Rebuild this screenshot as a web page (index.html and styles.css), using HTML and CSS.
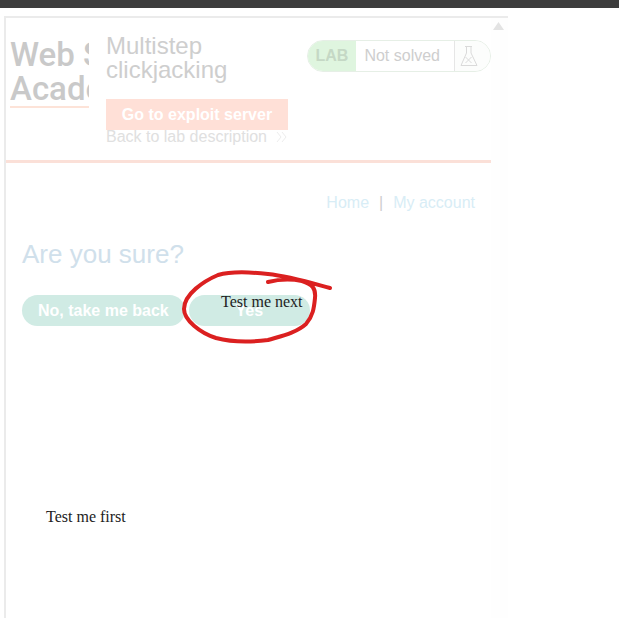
FILE: index.html
```html
<!DOCTYPE html>
<html lang="en">
<head>
  <meta charset="UTF-8" />
  <meta name="viewport" content="width=device-width, initial-scale=1.0"/>
  <title>Multistep clickjacking</title>
  <link rel="stylesheet" href="styles.css">
</head>
<body>
  <div class="topbar"></div>
  <div class="frame">
    <div class="page">
      <header class="header">
        <div class="logo">
          <span>Web Security</span>
          <span>Academy</span>
        </div>
        <div class="title">
          <h2>Multistep clickjacking</h2>
          <button class="exploit">Go to exploit server</button>
          <a class="back" href="#"><span>Back to lab description</span>
            <svg width="12" height="12" viewBox="0 0 12 12"><path d="M1 1l4 5-4 5M6 1l4 5-4 5"/></svg>
          </a>
        </div>
        <div class="status">
          <span class="lab">LAB</span>
          <span class="state">Not solved</span>
          <span class="flask">
            <svg width="18" height="22" viewBox="0 0 18 22"><path d="M5 1.500h7M6.500 2v6L1 20.500h16L11 8V2M5.500 12l6 6M11.500 12l-6 6"/></svg>
          </span>
        </div>
      </header>
      <nav class="nav">
        <a href="#">Home</a><span>|</span><a href="#">My account</a>
      </nav>
      <main class="content">
        <h1>Are you sure?</h1>
        <div class="actions">
          <button class="pill">No, take me back</button>
          <button class="pill yes">Yes</button>
        </div>
      </main>
    </div>
    <div class="scrollbar">
      <svg width="11" height="8" viewBox="0 0 11 8"><path d="M5.500 0L11 8H0z"/></svg>
    </div>
  </div>

  <!-- decoy texts sit over the framed page -->
  <div class="decoy first">Test me first</div>
  <div class="decoy next">Test me next</div>
  <svg class="marker" width="160" height="80" viewBox="0 0 160 80">
    <path d="M92 15C104 12 116 12 126 14C136 17 140 21 139 31C138 41 137 49 130 57C120 66 105 69 92 73C76 75 55 75 40 71C24 66 8 53 8 42C8 27 28 14 42 8C56 4 74 5 92 7C112 9 132 15 154 21"/>
  </svg>
</body>
</html>
```
FILE: styles.css
```css
body {
  margin: 0;
  min-height: 100vh;
  display: flex;
  flex-direction: column;
  background-color: #fff;
  font-family: "Liberation Sans", Arial, sans-serif;
  font-size: 16px;
}
h1, h2 {
  margin: 0;
  font-weight: normal;
}
a {
  text-decoration: none;
}
button {
  height: 31px;
  padding: 0 16px;
  border: none;
  color: #fff;
  font-family: inherit;
  font-size: 16px;
  font-weight: bold;
  white-space: nowrap;
  cursor: pointer;
}
.topbar {
  height: 8px;
  background-color: #3d3d3d;
}
.frame {
  flex: 1;
  display: flex;
  box-sizing: border-box;
  width: 100%;
  max-width: 508px;
  margin-top: 8px;
  padding-left: 4px;
}
.page {
  flex: 1;
  border-top: 2px solid #ebebeb;
  border-left: 2px solid #ebebeb;
}
.scrollbar {
  width: 17px;
  border-top: 2px solid #ebebeb;
  background-color: #fefefe;
}
.scrollbar svg {
  display: block;
  margin: 4px 0 0 2px;
  fill: #e3e3e3;
}
.header {
  display: flex;
  align-items: flex-start;
  height: 142px;
  border-bottom: 3px solid #fbe0d8;
}
.logo {
  width: 79px;
  margin: 20px 0 0 4px;
  overflow: hidden;
  border-bottom: 2px solid #fde3d8;
  color: #c9c9c9;
  font-family: Roboto, sans-serif;
  font-size: 33px;
  font-weight: 500;
  line-height: 34px;
}
.logo span {
  display: block;
  white-space: nowrap;
}
.title {
  width: 182px;
  margin: 16px 0 0 17px;
  color: #cecece;
}
.title h2 {
  margin-bottom: 17px;
  font-size: 24px;
  line-height: 24px;
}
.exploit {
  display: block;
  width: 100%;
  padding: 0;
  background-color: #ffe0d7;
}
.back {
  display: flex;
  align-items: center;
  justify-content: space-between;
  color: #e0e0e0;
  line-height: 14px;
  white-space: nowrap;
}
.back svg {
  fill: none;
  stroke: #ededed;
}
.status {
  display: flex;
  box-sizing: border-box;
  height: 32px;
  margin: 22px 0 0 auto;
  overflow: hidden;
  border: 1px solid #e6efe6;
  border-radius: 16px;
  color: #cecece;
  line-height: 30px;
  white-space: nowrap;
}
.lab {
  padding: 0 8px;
  background-color: #dff5df;
  color: #c5d8c5;
  font-weight: bold;
}
.state {
  padding: 0 14px 0 8px;
}
.flask {
  display: flex;
  align-items: center;
  padding: 0 12px 0 5px;
  border-left: 1px solid #e6e6e6;
  background-color: #fcfdfc;
}
.flask svg {
  fill: none;
  stroke: #dadada;
}
.nav {
  display: flex;
  justify-content: flex-end;
  gap: 10px;
  padding: 31px 16px 0 0;
  color: #cecece;
  line-height: 18px;
}
.nav a {
  color: #d8edf6;
}
.content {
  padding: 27px 16px;
}
.content h1 {
  color: #d0e0eb;
  font-size: 26px;
  line-height: 30px;
}
.actions {
  display: flex;
  gap: 4px;
  margin-top: 26px;
}
.pill {
  border-radius: 16px;
  background-color: #d0ebe4;
}
.yes {
  width: 121px;
}
.decoy {
  position: absolute;
  color: #222;
  font-family: "Liberation Serif", "Times New Roman", serif;
  line-height: 18px;
}
.first {
  top: 508px;
  left: 46px;
}
.next {
  top: 293px;
  left: 221px;
}
.marker {
  position: absolute;
  top: 267px;
  left: 176px;
  fill: none;
  stroke: #db2020;
  stroke-width: 4;
  stroke-linecap: round;
  stroke-linejoin: round;
  pointer-events: none;
}
```
